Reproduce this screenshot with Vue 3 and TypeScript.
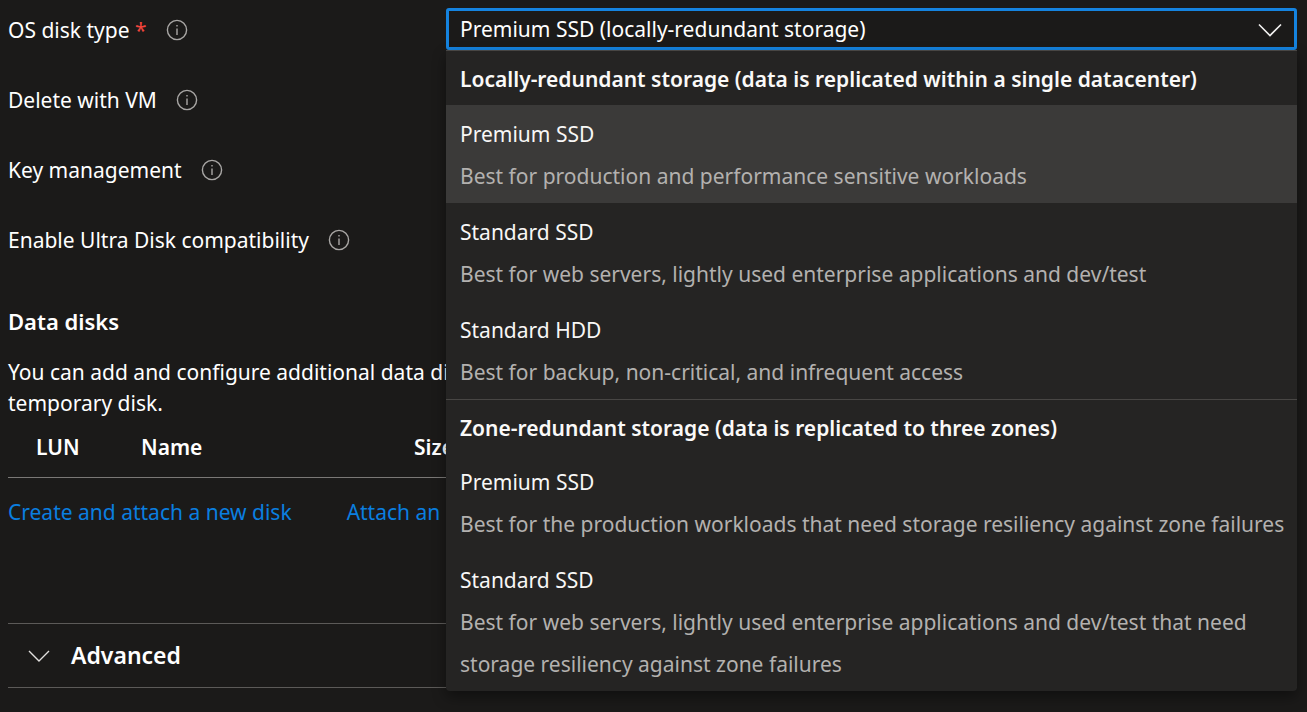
<script setup lang="ts">
import { ref } from 'vue'

interface DiskOption {
  id: string
  name: string
  detail: string
}
interface DiskGroup {
  id: string
  title: string
  options: DiskOption[]
}

const groups: DiskGroup[] = [
  {
    id: 'lrs',
    title: 'Locally-redundant storage (data is replicated within a single datacenter)',
    options: [
      { id: 'lrs-premium', name: 'Premium SSD', detail: 'Best for production and performance sensitive workloads' },
      { id: 'lrs-standard', name: 'Standard SSD', detail: 'Best for web servers, lightly used enterprise applications and dev/test' },
      { id: 'lrs-hdd', name: 'Standard HDD', detail: 'Best for backup, non-critical, and infrequent access' },
    ],
  },
  {
    id: 'zrs',
    title: 'Zone-redundant storage (data is replicated to three zones)',
    options: [
      { id: 'zrs-premium', name: 'Premium SSD', detail: 'Best for the production workloads that need storage resiliency against zone failures' },
      { id: 'zrs-standard', name: 'Standard SSD', detail: 'Best for web servers, lightly used enterprise applications and dev/test that need storage resiliency against zone failures' },
    ],
  },
]

const rows = ['Delete with VM', 'Key management', 'Enable Ultra Disk compatibility']
const selected = ref('lrs-premium')
const open = ref(true)

function choose(id: string) {
  selected.value = id
  open.value = false
}
</script>

<template>
  <main class="page">
    <div class="row">
      <label class="label" for="disk-type">OS disk type <span class="required">*</span></label>
      <button class="info" type="button" aria-label="About OS disk type">
        <svg viewBox="0 0 22 22"><circle cx="11" cy="11" r="9.6" /><path d="M11 9.5V16M11 6v1.6" /></svg>
      </button>
      <div class="field">
        <select id="disk-type" v-model="selected" class="select" @mousedown.prevent="open = !open">
          <option v-for="option in groups[0].options" :key="option.id" :value="option.id">
            {{ option.name }} (locally-redundant storage)
          </option>
          <option v-for="option in groups[1].options" :key="option.id" :value="option.id">
            {{ option.name }} (zone-redundant storage)
          </option>
        </select>
        <svg class="caret" viewBox="0 0 24 14"><path d="M1 1.5L12 12.5L23 1.5" /></svg>
        <div v-if="open" class="menu" role="listbox" aria-label="OS disk type">
          <div v-for="group in groups" :key="group.id" class="group" role="group" :aria-labelledby="group.id">
            <div :id="group.id" class="group-title">{{ group.title }}</div>
            <button
              v-for="option in group.options"
              :key="option.id"
              class="option"
              :class="{ active: option.id === selected }"
              type="button"
              role="option"
              :aria-selected="option.id === selected"
              @click="choose(option.id)"
            >
              <span class="name">{{ option.name }}</span>
              <span class="detail">{{ option.detail }}</span>
            </button>
          </div>
        </div>
      </div>
    </div>
    <div v-for="row in rows" :key="row" class="row">
      <span class="label">{{ row }}</span>
      <button class="info" type="button" :aria-label="'About ' + row">
        <svg viewBox="0 0 22 22"><circle cx="11" cy="11" r="9.6" /><path d="M11 9.5V16M11 6v1.6" /></svg>
      </button>
    </div>

    <h2 class="heading">Data disks</h2>
    <p class="intro">You can add and configure additional data disks<br />temporary disk.</p>
    <table class="disks">
      <thead>
        <tr>
          <th class="lun" scope="col">LUN</th>
          <th class="disk-name" scope="col">Name</th>
          <th scope="col">Size</th>
        </tr>
      </thead>
    </table>
    <nav class="links">
      <a href="#create">Create and attach a new disk</a>
      <a href="#attach">Attach an</a>
    </nav>

    <section class="advanced">
      <button class="toggle" type="button" aria-expanded="false">
        <svg class="chevron" viewBox="0 0 22 12"><path d="M1 1L11 11L21 1" /></svg>
        Advanced
      </button>
    </section>
  </main>
</template>

<style>
body {
  background: #1b1a19;
}
</style>

<style scoped>
.page {
  box-sizing: border-box;
  padding: 8px 10px 24px 8px;
  color: #ffffff;
  font-family: "Noto Sans", "Open Sans", sans-serif;
  font-size: 21px;
  line-height: 31px;
}
button,
select {
  font: inherit;
  color: inherit;
}
.row {
  position: relative;
  display: flex;
  align-items: center;
  gap: 19px;
  height: 44px;
  margin-bottom: 26px;
}
.required {
  color: #f1453d;
}
.info {
  display: flex;
  padding: 0;
  border: 0;
  background: none;
}
.info svg {
  width: 22px;
  height: 22px;
  fill: none;
  stroke: #a9a7a5;
  stroke-width: 1.4;
}
.field {
  position: absolute;
  top: 0;
  right: 0;
  left: 438px;
}
.select {
  display: block;
  box-sizing: border-box;
  width: 100%;
  height: 42px;
  padding: 0 48px 0 11px;
  border: 3px solid #1583df;
  border-radius: 3px;
  outline: 0;
  background: #1b1a19;
  appearance: none;
}
.caret {
  position: absolute;
  top: 15px;
  right: 15px;
  width: 24px;
  height: 14px;
  fill: none;
  stroke: #f3f2f1;
  stroke-width: 1.6;
  pointer-events: none;
}
.menu {
  position: absolute;
  z-index: 2;
  top: 100%;
  right: 0;
  left: 0;
  overflow: hidden;
  border-top: 1px solid #484644;
  border-radius: 0 0 4px 4px;
  background: #252423;
  box-shadow: 0 6px 14px rgba(0, 0, 0, 0.4);
}
.group + .group {
  border-top: 1px solid #484644;
}
.group-title {
  padding: 7px 14px 5px;
  color: #faf9f8;
  font-weight: 600;
  line-height: 42px;
}
.group + .group .group-title {
  padding-bottom: 4px;
}
.option {
  display: block;
  box-sizing: border-box;
  width: 100%;
  padding: 8px 0 6px 14px;
  border: 0;
  background: none;
  line-height: 42px;
  text-align: left;
}
.option.active {
  background: #3b3a39;
}
.name,
.detail {
  display: block;
}
.name {
  color: #f8f7f6;
}
.detail {
  color: #b3b1af;
}
.heading {
  margin: 44px 0 20px;
  font-size: 22px;
  font-weight: 600;
}
.intro {
  margin: 0;
}
.disks {
  width: 100%;
  border-collapse: collapse;
  border-bottom: 1px solid #7a7876;
}
.disks th {
  padding: 13px 0 14px;
  font-weight: 600;
  text-align: left;
}
.disks .lun {
  width: 105px;
  padding-left: 28px;
}
.disks .disk-name {
  width: 273px;
}
.links {
  display: flex;
  gap: 55px;
  margin: 19px 0 95px;
}
.links a {
  color: #0a7fe0;
  text-decoration: none;
}
.advanced {
  border-top: 1px solid #5c5a58;
  border-bottom: 1px solid #5c5a58;
}
.toggle {
  display: flex;
  align-items: center;
  gap: 21px;
  width: 100%;
  padding: 16px 20px;
  border: 0;
  background: none;
  font-size: 23px;
  font-weight: 600;
}
.chevron {
  width: 22px;
  height: 12px;
  fill: none;
  stroke: #e1dfdd;
  stroke-width: 1.4;
}
</style>
